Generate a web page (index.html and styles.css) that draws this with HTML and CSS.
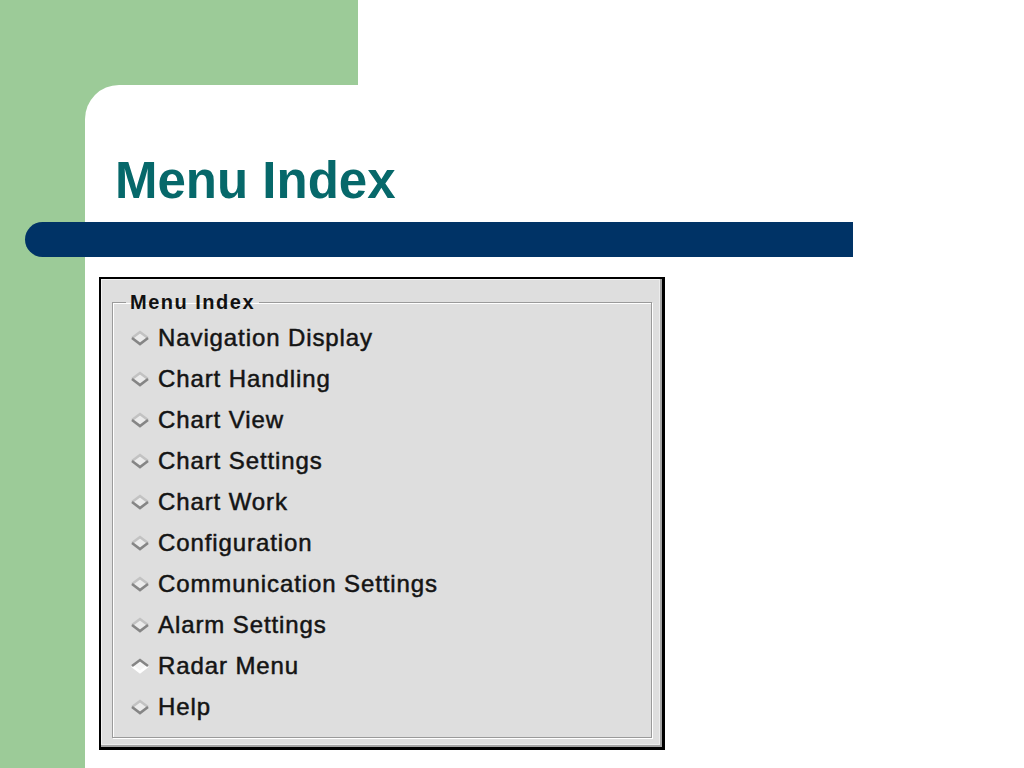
FILE: index.html
```html
<!DOCTYPE html>
<html lang="en">
<head>
<meta charset="utf-8">
<title>Menu Index</title>
<link rel="stylesheet" href="styles.css">
</head>
<body>
<div class="slide">
  <div class="top-band"></div>
  <div class="main">
    <div class="content">
      <h1 class="title">Menu Index</h1>
      <div class="bar"></div>
      <div class="panel">
        <fieldset class="group">
          <legend class="legend">Menu Index</legend>
          <ul class="items">
            <li class="item"><svg class="radio" viewBox="0 0 20 16"><path class="body" d="M2 8 L10 2 L18 8 L10 14 Z"/><path class="hi" d="M2 8 L10 2 L18 8"/><path class="lo" d="M2 8 L10 14 L18 8"/></svg><span>Navigation Display</span></li>
            <li class="item"><svg class="radio" viewBox="0 0 20 16"><path class="body" d="M2 8 L10 2 L18 8 L10 14 Z"/><path class="hi" d="M2 8 L10 2 L18 8"/><path class="lo" d="M2 8 L10 14 L18 8"/></svg><span>Chart Handling</span></li>
            <li class="item"><svg class="radio" viewBox="0 0 20 16"><path class="body" d="M2 8 L10 2 L18 8 L10 14 Z"/><path class="hi" d="M2 8 L10 2 L18 8"/><path class="lo" d="M2 8 L10 14 L18 8"/></svg><span>Chart View</span></li>
            <li class="item"><svg class="radio" viewBox="0 0 20 16"><path class="body" d="M2 8 L10 2 L18 8 L10 14 Z"/><path class="hi" d="M2 8 L10 2 L18 8"/><path class="lo" d="M2 8 L10 14 L18 8"/></svg><span>Chart Settings</span></li>
            <li class="item"><svg class="radio" viewBox="0 0 20 16"><path class="body" d="M2 8 L10 2 L18 8 L10 14 Z"/><path class="hi" d="M2 8 L10 2 L18 8"/><path class="lo" d="M2 8 L10 14 L18 8"/></svg><span>Chart Work</span></li>
            <li class="item"><svg class="radio" viewBox="0 0 20 16"><path class="body" d="M2 8 L10 2 L18 8 L10 14 Z"/><path class="hi" d="M2 8 L10 2 L18 8"/><path class="lo" d="M2 8 L10 14 L18 8"/></svg><span>Configuration</span></li>
            <li class="item"><svg class="radio" viewBox="0 0 20 16"><path class="body" d="M2 8 L10 2 L18 8 L10 14 Z"/><path class="hi" d="M2 8 L10 2 L18 8"/><path class="lo" d="M2 8 L10 14 L18 8"/></svg><span>Communication Settings</span></li>
            <li class="item"><svg class="radio" viewBox="0 0 20 16"><path class="body" d="M2 8 L10 2 L18 8 L10 14 Z"/><path class="hi" d="M2 8 L10 2 L18 8"/><path class="lo" d="M2 8 L10 14 L18 8"/></svg><span>Alarm Settings</span></li>
            <li class="item selected"><svg class="radio" viewBox="0 0 20 16"><path class="sel-fill" d="M2 8 L10 2 L18 8 L10 14 Z"/><path class="lo-sel" d="M2 8 L10 14 L18 8"/><path class="hi-sel" d="M2 8 L10 2 L18 8"/></svg><span>Radar Menu</span></li>
            <li class="item"><svg class="radio" viewBox="0 0 20 16"><path class="body" d="M2 8 L10 2 L18 8 L10 14 Z"/><path class="hi" d="M2 8 L10 2 L18 8"/><path class="lo" d="M2 8 L10 14 L18 8"/></svg><span>Help</span></li>
          </ul>
        </fieldset>
      </div>
    </div>
  </div>
</div>
</body>
</html>
```

FILE: styles.css
```css
html, body {
  margin: 0;
  padding: 0;
  background: #ffffff;
}

.slide {
  width: 1024px;
  height: 768px;
  overflow: hidden;
  display: flex;
  flex-direction: column;
}

.top-band {
  width: 358px;
  height: 85px;
  background: #9ccb98;
  flex: none;
}

.main {
  flex: 1;
  background: #9ccb98;
  padding-left: 85px;
  display: flex;
}

.content {
  flex: 1;
  background: #ffffff;
  border-top-left-radius: 34px;
  display: flex;
  flex-direction: column;
}

.title {
  margin: 70px 0 0 30px;
  font-family: "Liberation Sans", Arial, sans-serif;
  font-weight: bold;
  font-size: 51px;
  line-height: 51px;
  color: #06686a;
}

.bar {
  margin: 16px 0 0 -60px;
  width: 828px;
  height: 35px;
  background: #003366;
  border-radius: 17.5px 0 0 17.5px;
}

.panel {
  margin: 20px 0 0 14px;
  width: 566px;
  height: 473px;
  box-sizing: border-box;
  border-style: solid;
  border-color: #000;
  border-width: 2px 3px 3px 2px;
  background: #dedede;
  box-shadow: inset -2px -2px 0 #a4a4a4, inset -3px -3px 0 #ececec, inset 1px 1px 0 #f2f2f2;
  padding: 13px 0 0 11px;
}

.group {
  margin: 0;
  width: 540px;
  box-sizing: border-box;
  border: 1px solid #9a9a9a;
  box-shadow: 1px 1px 0 #ffffff, inset 1px 1px 0 #ffffff;
  padding: 0 0 10px 0;
  min-width: 0;
}

.legend {
  margin-left: 13px;
  padding: 0 4px;
  font-family: "Liberation Sans", Arial, sans-serif;
  font-weight: bold;
  font-size: 20px;
  line-height: 20px;
  letter-spacing: 1.5px;
  color: #111;
}

.items {
  list-style: none;
  margin: 0;
  padding: 5px 0 0 17px;
}

.item {
  display: flex;
  align-items: center;
  height: 41px;
  gap: 8px;
  font-family: "Liberation Sans", Arial, sans-serif;
  font-size: 24px;
  letter-spacing: 0.9px;
  color: #141414;
  -webkit-text-stroke: 0.5px #141414;
}

.radio {
  width: 20px;
  height: 16px;
  flex: none;
}

.radio path {
  fill: none;
  stroke-width: 2.6;
  stroke-linejoin: miter;
}

.radio .body {
  fill: #ebebeb;
  stroke: none;
}

.radio .hi {
  stroke: #c2c2c2;
}

.radio .lo {
  stroke: #858585;
}

.radio .sel-fill {
  fill: #f6f6f6;
  stroke: none;
}

.radio .lo-sel {
  stroke: #ffffff;
}

.radio .hi-sel {
  stroke: #858585;
}
```
